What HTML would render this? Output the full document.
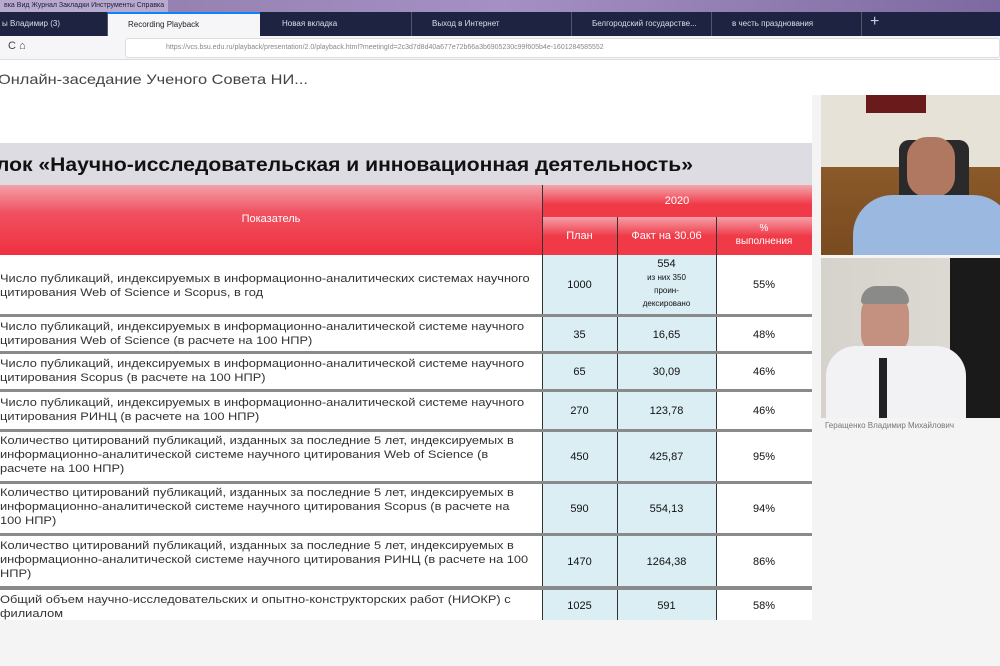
<!DOCTYPE html>
<html><head><meta charset="utf-8"><style>
*{margin:0;padding:0;box-sizing:border-box}
body{width:1000px;height:666px;overflow:hidden;background:#f4f4f4;font-family:"Liberation Sans","Noto Sans CJK SC",sans-serif;position:relative}
.a{position:absolute}
.tab{position:absolute;top:12px;height:24px;color:#dde;font-size:8px;line-height:24px;padding-left:20px;border-right:1px solid #556}
.cell{position:absolute;font-size:11px;color:#333;line-height:14px;white-space:nowrap;transform:scaleX(1.165);transform-origin:0 0}
.num{position:absolute;font-size:11px;color:#111;text-align:center;display:flex;align-items:center;justify-content:center}
.hl{position:absolute;left:0;width:812px;height:3px;background:#8a8a8a}
.vl{position:absolute;width:1px;background:#333}
</style></head><body>
<div class="a" style="left:0;top:0;width:1000px;height:12px;background:linear-gradient(90deg,#8d7aa8,#a590c4 50%,#7c6aa0);"></div>
<div class="a" style="left:0;top:0;font-size:7px;color:#223;line-height:12px;background:#b8a9d0;padding:0 4px">вка Вид Журнал Закладки Инструменты Справка</div>
<div class="a" style="left:0;top:12px;width:1000px;height:24px;background:#1d2340"></div>
<div class="tab" style="left:0;width:108px;padding-left:2px">ы Владимир (3)</div>
<div class="a" style="left:108px;top:12px;width:152px;height:24px;background:#f6f6f8;border-top:2px solid #0a84ff;font-size:8px;line-height:21px;padding-left:20px;color:#222">Recording Playback</div>
<div class="tab" style="left:262px;width:150px">Новая вкладка</div>
<div class="tab" style="left:412px;width:160px">Выход в Интернет</div>
<div class="tab" style="left:572px;width:140px">Белгородский государстве...</div>
<div class="tab" style="left:712px;width:150px">в честь празднования</div>
<div class="a" style="left:870px;top:13px;color:#ccd;font-size:16px">+</div>
<div class="a" style="left:0;top:36px;width:1000px;height:24px;background:#f6f6f8;border-bottom:1px solid #ddd"></div>
<div class="a" style="left:8px;top:40px;font-size:11px;color:#444">C ⌂</div>
<div class="a" style="left:125px;top:38px;width:875px;height:20px;background:#fff;border:1px solid #ddd;border-radius:3px;font-size:7px;color:#888;line-height:18px;padding-left:40px">https://vcs.bsu.edu.ru/playback/presentation/2.0/playback.html?meetingId=2c3d7d8d40a677e72b66a3b6905230c99f605b4e-1601284585552</div>
<div class="a" style="left:0;top:60px;width:1000px;height:35px;background:#fff"></div>
<div class="a" style="left:-2px;top:71px;font-size:14px;color:#444;white-space:nowrap;transform:scaleX(1.17);transform-origin:0 0">Онлайн-заседание Ученого Совета НИ...</div>
<div class="a" style="left:0;top:95px;width:812px;height:525px;background:#fff"></div>
<div class="a" style="left:0;top:143px;width:812px;height:42px;background:#dcdce2"></div>
<div class="a" style="left:-4px;top:155px;font-size:19px;font-weight:bold;color:#111;white-space:nowrap;transform:scaleX(1.11);transform-origin:0 0">лок «Научно-исследовательская и инновационная деятельность»</div>
<div class="a" style="left:0;top:185px;width:542px;height:70px;background:linear-gradient(#f2a0a8,#f05060 40%,#f03040);"></div>
<div class="a" style="left:542px;top:185px;width:270px;height:32px;background:linear-gradient(#f4a8ae,#f03a48 60%);"></div>
<div class="a" style="left:542px;top:217px;width:270px;height:38px;background:linear-gradient(#f4a0a8,#f03a48 50%);"></div>
<div class="a" style="left:0;top:213px;width:542px;text-align:center;color:#fff;font-size:11px">Показатель</div>
<div class="a" style="left:542px;top:195px;width:270px;text-align:center;color:#fff;font-size:11px">2020</div>
<div class="a" style="left:542px;top:230px;width:75px;text-align:center;color:#fff;font-size:11px">План</div>
<div class="a" style="left:617px;top:230px;width:99px;text-align:center;color:#fff;font-size:11px">Факт на 30.06</div>
<div class="a" style="left:716px;top:222px;width:96px;text-align:center;color:#fff;font-size:10px;line-height:13px">%<br>выполнения</div>
<div class="a" style="left:542px;top:255px;width:174px;height:365px;background:#dbeef4"></div>
<div class="vl" style="left:542px;top:185px;height:435px"></div>
<div class="vl" style="left:617px;top:217px;height:403px"></div>
<div class="vl" style="left:716px;top:217px;height:403px"></div>
<div class="hl" style="top:314px"></div><div class="hl" style="top:351px"></div><div class="hl" style="top:389px"></div><div class="hl" style="top:429px"></div><div class="hl" style="top:481px"></div><div class="hl" style="top:533px"></div><div class="hl" style="top:586px;height:4px"></div>
<div class="cell" style="left:0;top:272px">Число публикаций, индексируемых в информационно-аналитических системах научного<br>цитирования Web of Science и Scopus, в год</div>
<div class="cell" style="left:0;top:320px">Число публикаций, индексируемых в информационно-аналитической системе научного<br>цитирования Web of Science (в расчете на 100 НПР)</div>
<div class="cell" style="left:0;top:357px">Число публикаций, индексируемых в информационно-аналитической системе научного<br>цитирования Scopus (в расчете на 100 НПР)</div>
<div class="cell" style="left:0;top:396px">Число публикаций, индексируемых в информационно-аналитической системе научного<br>цитирования РИНЦ (в расчете на 100 НПР)</div>
<div class="cell" style="left:0;top:434px">Количество цитирований публикаций, изданных за последние 5 лет, индексируемых в<br>информационно-аналитической системе научного цитирования Web of Science (в<br>расчете на 100 НПР)</div>
<div class="cell" style="left:0;top:486px">Количество цитирований публикаций, изданных за последние 5 лет, индексируемых в<br>информационно-аналитической системе научного цитирования Scopus (в расчете на<br>100 НПР)</div>
<div class="cell" style="left:0;top:539px">Количество цитирований публикаций, изданных за последние 5 лет, индексируемых в<br>информационно-аналитической системе научного цитирования РИНЦ (в расчете на 100<br>НПР)</div>
<div class="cell" style="left:0;top:593px">Общий объем научно-исследовательских и опытно-конструкторских работ (НИОКР) с<br>филиалом</div>
<div class="num" style="left:542px;top:255px;width:75px;height:60px">1000</div>
<div class="a" style="left:617px;top:258px;width:99px;text-align:center;font-size:11px;color:#111;line-height:13px">554<br><span style="font-size:8px;line-height:11px">из них 350<br>проин-<br>дексировано</span></div>
<div class="num" style="left:716px;top:255px;width:96px;height:60px">55%</div>
<div class="num" style="left:542px;top:317px;width:75px;height:35px">35</div><div class="num" style="left:617px;top:317px;width:99px;height:35px">16,65</div><div class="num" style="left:716px;top:317px;width:96px;height:35px">48%</div>
<div class="num" style="left:542px;top:354px;width:75px;height:36px">65</div><div class="num" style="left:617px;top:354px;width:99px;height:36px">30,09</div><div class="num" style="left:716px;top:354px;width:96px;height:36px">46%</div>
<div class="num" style="left:542px;top:392px;width:75px;height:38px">270</div><div class="num" style="left:617px;top:392px;width:99px;height:38px">123,78</div><div class="num" style="left:716px;top:392px;width:96px;height:38px">46%</div>
<div class="num" style="left:542px;top:432px;width:75px;height:50px">450</div><div class="num" style="left:617px;top:432px;width:99px;height:50px">425,87</div><div class="num" style="left:716px;top:432px;width:96px;height:50px">95%</div>
<div class="num" style="left:542px;top:484px;width:75px;height:50px">590</div><div class="num" style="left:617px;top:484px;width:99px;height:50px">554,13</div><div class="num" style="left:716px;top:484px;width:96px;height:50px">94%</div>
<div class="num" style="left:542px;top:536px;width:75px;height:51px">1470</div><div class="num" style="left:617px;top:536px;width:99px;height:51px">1264,38</div><div class="num" style="left:716px;top:536px;width:96px;height:51px">86%</div>
<div class="num" style="left:542px;top:590px;width:75px;height:32px">1025</div><div class="num" style="left:617px;top:590px;width:99px;height:32px">591</div><div class="num" style="left:716px;top:590px;width:96px;height:32px">58%</div>
<div class="a" style="left:821px;top:95px;width:179px;height:160px;background:linear-gradient(#e6e2d8 0,#e6e2d8 45%,#8a5a2a 45%,#7a4a20 100%);overflow:hidden">
<div class="a" style="left:45px;top:0;width:60px;height:18px;background:#6a1a1a"></div>
<div class="a" style="left:78px;top:45px;width:70px;height:80px;background:#2a2a2a;border-radius:10px"></div>
<div class="a" style="left:86px;top:42px;width:48px;height:60px;background:#b07860;border-radius:20px"></div>
<div class="a" style="left:32px;top:100px;width:160px;height:70px;background:#9ab8e0;border-radius:40px 40px 0 0"></div>
</div>
<div class="a" style="left:821px;top:258px;width:179px;height:160px;background:linear-gradient(90deg,#d6d2cc 0,#dcd8d2 72%,#1a1a1a 72%);overflow:hidden">
<div class="a" style="left:40px;top:35px;width:48px;height:62px;background:#c49080;border-radius:20px"></div>
<div class="a" style="left:40px;top:28px;width:48px;height:18px;background:#8a8a88;border-radius:20px 20px 4px 4px"></div>
<div class="a" style="left:5px;top:88px;width:140px;height:80px;background:#f2f2f4;border-radius:30px 30px 0 0"></div>
<div class="a" style="left:58px;top:100px;width:8px;height:60px;background:#222"></div>
</div>
<div class="a" style="left:825px;top:421px;font-size:8px;color:#777;white-space:nowrap">Геращенко Владимир Михайлович</div>
</body></html>
